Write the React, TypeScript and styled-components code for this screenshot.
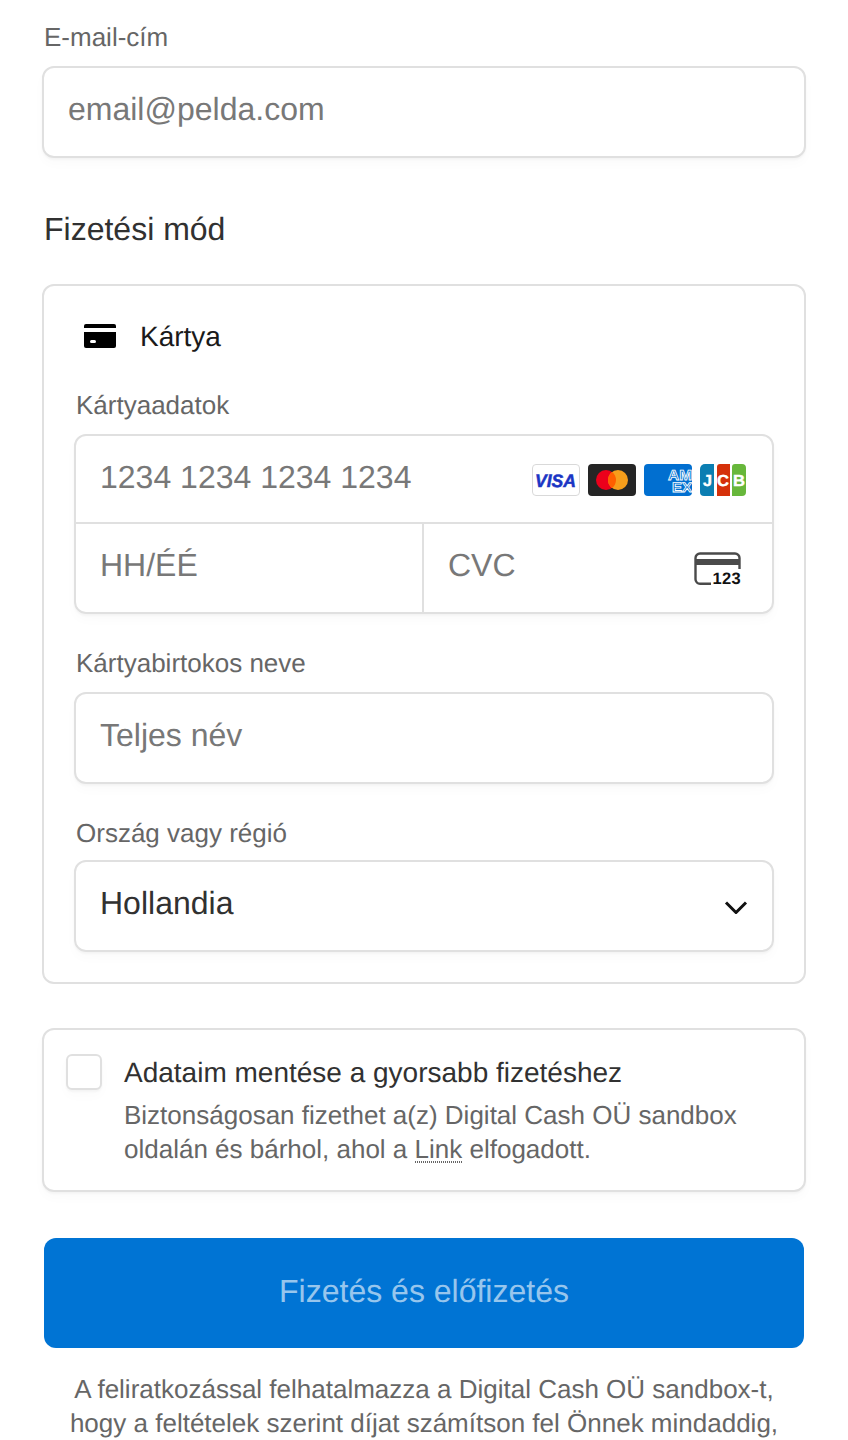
import React from "react";
import styled, { createGlobalStyle } from "styled-components";

const Global = createGlobalStyle`
  html, body { margin: 0; padding: 0; background: #fff; }
  body {
    height: 1440px;
    overflow: hidden;
    font-family: "Liberation Sans", Arial, sans-serif;
    text-rendering: geometricPrecision;
  }
  * { box-sizing: border-box; }
`;

const Page = styled.main`
  width: 848px;
  height: 1440px;
  overflow: hidden;
  padding: 19px 42px 0;
`;

const Label = styled.label`
  display: block;
  font-size: 26px;
  line-height: 36px;
  color: #666;
  margin: 0 0 11px 2px;
`;

const shadow = "0 2px 2px rgba(0,0,0,.03), 0 6px 12px rgba(0,0,0,.02)";

const TextInput = styled.input`
  display: block;
  width: 100%;
  height: 92px;
  border: 2px solid #e0e0e0;
  border-radius: 12px;
  padding: 0 24px 6px;
  font: 32px "Liberation Sans", Arial, sans-serif;
  text-rendering: geometricPrecision;
  color: #313131;
  background: #fff;
  box-shadow: ${shadow};
  outline: none;
  &::placeholder { color: #787878; opacity: 1; }
`;

const Heading = styled.h2`
  margin: 51px 0 35px 2px;
  font-size: 32px;
  line-height: 40px;
  font-weight: 400;
  color: #313131;
`;

const Panel = styled.section`
  border: 2px solid #e0e0e0;
  border-radius: 12px;
  background: #fff;
`;

const CardPanel = styled(Panel)`
  height: 700px;
  padding: 38px 30px 0;
`;

const MethodRow = styled.div`
  display: flex;
  align-items: center;
  gap: 24px;
  height: 24px;
  margin: 0 0 39px 10px;
  font-size: 28px;
  color: #1a1a1a;
`;

const MethodName = styled.span`
  position: relative;
  top: 1px;
`;

const FieldBlock = styled.div`
  margin-bottom: 31px;
`;

const CardGroup = styled.div`
  border: 2px solid #e0e0e0;
  border-radius: 12px;
  box-shadow: ${shadow};
  height: 180px;
  display: grid;
  grid-template-rows: 88px 1fr;
  overflow: hidden;
  margin-bottom: 31px;
`;

const CardRow = styled.div`
  display: flex;
  align-items: center;
  padding: 0 26px 0 24px;
  font-size: 32px;
  color: #787878;
`;

const CardNumber = styled(CardRow)`
  justify-content: space-between;
  border-bottom: 2px solid #e0e0e0;
`;

const SplitRow = styled.div`
  display: grid;
  grid-template-columns: 348px 1fr;
`;

const ExpiryCell = styled(CardRow)`
  border-right: 2px solid #e0e0e0;
  padding-bottom: 6px;
`;

const CvcCell = styled(CardRow)`
  justify-content: space-between;
  padding-right: 30px;
  padding-bottom: 6px;
`;

const NumberText = styled.span`
  position: relative;
  top: -2px;
`;

const Brands = styled.div`
  display: flex;
  gap: 8px;
  margin-top: 2px;
`;

const SelectBox = styled.div`
  height: 92px;
  border: 2px solid #e0e0e0;
  border-radius: 12px;
  box-shadow: ${shadow};
  display: flex;
  align-items: center;
  justify-content: space-between;
  padding: 0 24px 6px;
  font-size: 32px;
  color: #313131;
`;

const CountryLabel = styled(Label)`
  margin-bottom: 9px;
`;

const SaveOuter = styled(Panel)`
  margin-top: 44px;
  height: 164px;
  box-shadow: ${shadow};
  display: flex;
  padding: 24px 30px 0 22px;
  gap: 22px;
`;

const CheckBox = styled.div`
  width: 36px;
  height: 36px;
  flex: none;
  border: 2px solid #e0e0e0;
  border-radius: 6px;
  background: #fff;
  box-shadow: ${shadow};
`;

const SaveTitle = styled.div`
  font-size: 28px;
  line-height: 36px;
  color: #313131;
  margin-top: 1px;
`;

const SaveText = styled.div`
  margin-top: 7px;
  font-size: 26px;
  line-height: 34px;
  color: #666;
`;

const LinkWord = styled.span`
  background-image: repeating-linear-gradient(90deg, #666 0 1px, transparent 1px 2px);
  background-size: 100% 2px;
  background-repeat: no-repeat;
  background-position: 0 calc(100% - 1px);
`;

const PayButton = styled.button`
  display: block;
  width: 760px;
  height: 110px;
  margin: 46px 2px 0;
  border: 0;
  border-radius: 12px;
  background: #0074d4;
  color: rgba(255,255,255,.6);
  font: 32px "Liberation Sans", Arial, sans-serif;
  text-rendering: geometricPrecision;
  padding: 0 0 4px;
`;

const Legal = styled.p`
  margin: 24px 0 0;
  text-align: center;
  font-size: 26px;
  line-height: 34px;
  color: #666;
`;

const CvcSvg = styled.svg`
  margin-top: 8px;
`;

const ChevronSvg = styled.svg`
  margin-top: 8px;
`;

const CardIcon = () => (
  <svg width="32" height="24" viewBox="0 0 32 24">
    <path d="M2 0h28a2 2 0 0 1 2 2v2H0V2a2 2 0 0 1 2-2z" fill="#000" />
    <path d="M0 8h32v14a2 2 0 0 1-2 2H2a2 2 0 0 1-2-2z" fill="#000" />
    <rect x="6" y="16" width="6" height="3" rx="1.500" fill="#fff" />
  </svg>
);

const Visa = () => (
  <svg width="48" height="32" viewBox="0 0 48 32">
    <rect x="0.5" y="0.5" width="47" height="31" rx="3.5" fill="#fff" stroke="#d9d9d9" />
    <text x="3" y="22.500" fontFamily="Liberation Sans" fontWeight="700" fontStyle="italic" fontSize="18" fill="#1a35c4" stroke="#1a35c4" strokeWidth="0.5" textLength="41" lengthAdjust="spacingAndGlyphs">VISA</text>
  </svg>
);

const Master = () => (
  <svg width="48" height="32" viewBox="0 0 48 32">
    <rect width="48" height="32" rx="4" fill="#252525" />
    <circle cx="18" cy="16" r="10" fill="#eb001b" />
    <circle cx="30" cy="16" r="10" fill="#f79e1b" />
    <path d="M24 8a10 10 0 0 1 0 16a10 10 0 0 1 0-16z" fill="#ff5f00" />
  </svg>
);

const Amex = () => (
  <svg width="48" height="32" viewBox="0 0 48 32">
    <rect width="48" height="32" rx="4" fill="#016fd0" />
    <text x="24" y="15.500" fontFamily="Liberation Sans" fontWeight="700" fontSize="14.500" fill="#016fd0" stroke="#fff" strokeWidth="0.8" textLength="24" lengthAdjust="spacingAndGlyphs">AM</text>
    <text x="28" y="28" fontFamily="Liberation Sans" fontWeight="700" fontSize="13.500" fill="#016fd0" stroke="#fff" strokeWidth="0.8" textLength="20" lengthAdjust="spacingAndGlyphs">EX</text>
  </svg>
);

const Jcb = () => (
  <svg width="46" height="32" viewBox="0 0 46 32">
    <path d="M5 0h9v32H4a4 4 0 0 1-4-4V5a5 5 0 0 1 5-5z" fill="#0b7eb2" />
    <path d="M20 0h10v32H17V3a3 3 0 0 1 3-3z" fill="#d5310a" />
    <path d="M35 0h7a4 4 0 0 1 4 4v24a4 4 0 0 1-4 4H32V3a3 3 0 0 1 3-3z" fill="#67b73b" />
    <text x="3" y="21.500" fontFamily="Liberation Sans" fontWeight="700" fontSize="16" fill="#fff" stroke="#fff" strokeWidth="0.4" textLength="9" lengthAdjust="spacingAndGlyphs">J</text>
    <text x="17" y="21.500" fontFamily="Liberation Sans" fontWeight="700" fontSize="16" fill="#fff" stroke="#fff" strokeWidth="0.4" textLength="12" lengthAdjust="spacingAndGlyphs">C</text>
    <text x="33" y="21.500" fontFamily="Liberation Sans" fontWeight="700" fontSize="16" fill="#fff" stroke="#fff" strokeWidth="0.4" textLength="12" lengthAdjust="spacingAndGlyphs">B</text>
  </svg>
);

const Cvc = () => (
  <CvcSvg width="48" height="34" viewBox="0 0 48 34">
    <path d="M17 31.800H6a4.500 4.500 0 0 1-4.500-4.500V6A4.500 4.500 0 0 1 6 1.500h35A4.500 4.500 0 0 1 45.500 6v11" fill="none" stroke="#4a4a4a" strokeWidth="2.400" />
    <rect x="2" y="7" width="43" height="6" fill="#4a4a4a" />
    <text x="18.500" y="31.500" fontFamily="Liberation Sans" fontWeight="700" fontSize="16.500" letterSpacing="0.3" fill="#111">123</text>
  </CvcSvg>
);

const Chevron = () => (
  <ChevronSvg width="24" height="14" viewBox="0 0 24 14">
    <path d="M2 2.500l10 10 10-10" fill="none" stroke="#111" strokeWidth="3" />
  </ChevronSvg>
);

export default function App() {
  return (
    <Page>
      <Global />
      <Label htmlFor="email">E-mail-cím</Label>
      <TextInput id="email" placeholder="email@pelda.com" />
      <Heading>Fizetési mód</Heading>
      <CardPanel>
        <MethodRow>
          <CardIcon />
          <MethodName>Kártya</MethodName>
        </MethodRow>
        <Label>Kártyaadatok</Label>
        <CardGroup>
          <CardNumber>
            <NumberText>1234 1234 1234 1234</NumberText>
            <Brands>
              <Visa />
              <Master />
              <Amex />
              <Jcb />
            </Brands>
          </CardNumber>
          <SplitRow>
            <ExpiryCell>HH/ÉÉ</ExpiryCell>
            <CvcCell>
              CVC
              <Cvc />
            </CvcCell>
          </SplitRow>
        </CardGroup>
        <FieldBlock>
          <Label htmlFor="name">Kártyabirtokos neve</Label>
          <TextInput id="name" placeholder="Teljes név" />
        </FieldBlock>
        <CountryLabel>Ország vagy régió</CountryLabel>
        <SelectBox>
          Hollandia
          <Chevron />
        </SelectBox>
      </CardPanel>
      <SaveOuter>
        <CheckBox />
        <div>
          <SaveTitle>Adataim mentése a gyorsabb fizetéshez</SaveTitle>
          <SaveText>
            Biztonságosan fizethet a(z) Digital Cash OÜ sandbox oldalán és bárhol, ahol a <LinkWord>Link</LinkWord> elfogadott.
          </SaveText>
        </div>
      </SaveOuter>
      <PayButton>Fizetés és előfizetés</PayButton>
      <Legal>
        A feliratkozással felhatalmazza a Digital Cash OÜ sandbox-t,
        <br />
        hogy a feltételek szerint díjat számítson fel Önnek mindaddig,
      </Legal>
    </Page>
  );
}
